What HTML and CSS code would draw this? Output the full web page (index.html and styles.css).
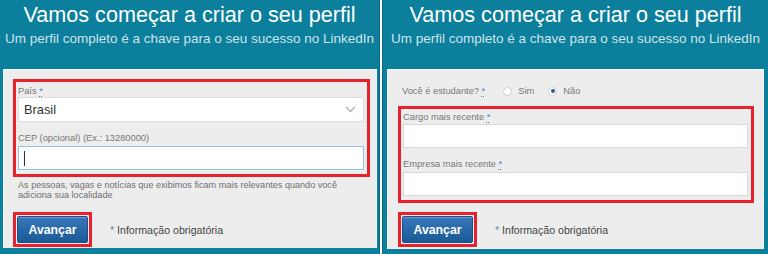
FILE: index.html
```html
<!DOCTYPE html>
<html lang="pt-br">
<head>
  <meta charset="UTF-8">
  <meta name="viewport" content="width=device-width, initial-scale=1.0">
  <title>Vamos começar a criar o seu perfil</title>
  <link rel="stylesheet" href="styles.css">
</head>
<body>
  <div class="screens">
    <!-- Passo 1: localidade -->
    <section class="panel panel-left">
      <header class="panel-head">
        <h1>Vamos começar a criar o seu perfil</h1>
        <p>Um perfil completo é a chave para o seu sucesso no LinkedIn</p>
      </header>
      <div class="card">
        <div class="highlight fields">
          <label class="field-label label-first">País <abbr>*</abbr></label>
          <div class="select">
            <span>Brasil</span>
            <svg class="chevron" width="11" height="7" viewBox="0 0 11 7">
              <path d="M1 1 L5.5 5.5 L10 1" fill="none" stroke="#a9a9a9" stroke-width="1.2"/>
            </svg>
          </div>
          <label class="field-label">CEP (opcional) (Ex.: 13280000)</label>
          <div class="input focused"><span class="caret"></span></div>
        </div>
        <p class="hint">As pessoas, vagas e notícias que exibimos ficam mais relevantes quando você adiciona sua localidade</p>
        <div class="actions">
          <div class="highlight btn-wrap"><button class="btn">Avançar</button></div>
          <span class="note"><abbr>*</abbr> Informação obrigatória</span>
        </div>
      </div>
    </section>

    <!-- Passo 2: experiência -->
    <section class="panel panel-right">
      <header class="panel-head">
        <h1>Vamos começar a criar o seu perfil</h1>
        <p>Um perfil completo é a chave para o seu sucesso no LinkedIn</p>
      </header>
      <div class="card">
        <div class="student-row">
          <span class="field-label">Você é estudante? <abbr>*</abbr></span>
          <span class="radio"><span class="dot"></span>Sim</span>
          <span class="radio"><span class="dot checked"></span>Não</span>
        </div>
        <div class="highlight fields">
          <label class="field-label label-first">Cargo mais recente <abbr>*</abbr></label>
          <div class="input"></div>
          <label class="field-label">Empresa mais recente <abbr>*</abbr></label>
          <div class="input"></div>
        </div>
        <div class="actions">
          <div class="highlight btn-wrap"><button class="btn">Avançar</button></div>
          <span class="note"><abbr>*</abbr> Informação obrigatória</span>
        </div>
      </div>
    </section>
  </div>
</body>
</html>
```

FILE: styles.css
```css
* {
  box-sizing: border-box;
  margin: 0;
  padding: 0;
}

body {
  font-family: "Liberation Sans", Arial, sans-serif;
  background-color: #ffffff;
  width: 768px;
  height: 254px;
  overflow: hidden;
}

.screens {
  display: flex;
  gap: 2px;
  height: 254px;
}

.panel {
  display: flex;
  flex-direction: column;
  background-color: #0b7f9b;
  height: 254px;
}

.panel-left {
  width: 380px;
  border-right: 1px solid #0a6880;
}

.panel-right {
  width: 386px;
  border-left: 1px solid #0a6880;
}

.panel-head {
  height: 69px;
  padding-top: 3px;
  text-align: center;
  color: #ffffff;
}

.panel-head h1 {
  font-size: 21.6px;
  font-weight: normal;
  line-height: 24px;
}

.panel-head p {
  margin-top: 4px;
  font-size: 13.5px;
  line-height: 16px;
  color: #cde4ec;
}

.card {
  flex: 1;
  background-color: #ededed;
  border: 1px solid #f6f6f6;
  border-bottom: none;
  padding: 9px 6px 0 9px;
}

.panel-left .card {
  margin: 0 2px 6px 3px;
}

.panel-right .card {
  margin: 0 4px 5px 4px;
  padding: 0 9px 0 10px;
}

abbr {
  color: #4f86bd;
  text-decoration: underline dotted;
  text-underline-offset: 2px;
}

.highlight {
  border: 3px solid #e8222c;
}

.fields {
  display: flex;
  flex-direction: column;
  padding: 2px 3px 4px 2px;
}

.field-label {
  font-size: 9.3px;
  line-height: 12px;
  color: #777777;
  margin-top: 10px;
  margin-bottom: 2px;
}

.field-label.label-first {
  margin-top: 1px;
  margin-bottom: 0;
}

.panel-right .field-label.label-first {
  margin-top: 0;
  margin-bottom: 1px;
}

.select {
  height: 25px;
  background-color: #ffffff;
  border: 1px solid #dcdcdc;
  display: flex;
  align-items: center;
  justify-content: space-between;
  padding: 0 7px 0 5px;
  font-size: 12.8px;
  color: #333333;
}

.input {
  height: 24px;
  background-color: #ffffff;
  border: 1px solid #d9d9d9;
  display: flex;
  align-items: center;
  padding-left: 5px;
}

.input.focused {
  border-color: #8cc5e6;
}

.caret {
  width: 1px;
  height: 15px;
  background-color: #333333;
}

.hint {
  margin-top: 3px;
  padding: 0 6px 0 5px;
  font-size: 9.1px;
  line-height: 10px;
  color: #6f6f6f;
}

.actions {
  display: flex;
  align-items: center;
  gap: 18px;
  margin-top: 12px;
}

.panel-right .actions {
  margin-top: 9px;
}

.btn-wrap {
  padding: 1px;
}

.btn {
  display: block;
  width: 71px;
  height: 27px;
  border: 1px solid #1b4f85;
  border-radius: 2px;
  background: linear-gradient(#3878bb, #1b5996);
  box-shadow: inset 0 1px 0 rgba(255, 255, 255, 0.25);
  color: #ffffff;
  font-family: "Liberation Sans", Arial, sans-serif;
  font-size: 12.3px;
  font-weight: bold;
}

.note {
  font-size: 10.6px;
  color: #444444;
}

.note abbr {
  text-decoration: none;
  color: #5b8cbf;
}

.student-row {
  display: flex;
  align-items: center;
  height: 18px;
  margin-top: 12px;
  margin-bottom: 6px;
  padding-left: 4px;
}

.student-row .field-label {
  margin: 0 18px 0 0;
}

.radio {
  display: flex;
  align-items: center;
  font-size: 9.3px;
  color: #777777;
  margin-right: 14px;
}

.radio .dot {
  width: 9px;
  height: 9px;
  border-radius: 50%;
  background-color: #ffffff;
  border: 1px solid #d0d0d0;
  margin-right: 6px;
  display: flex;
  align-items: center;
  justify-content: center;
}

.radio .dot.checked::after {
  content: "";
  width: 4px;
  height: 4px;
  border-radius: 50%;
  background-color: #1d5f9f;
}
```
